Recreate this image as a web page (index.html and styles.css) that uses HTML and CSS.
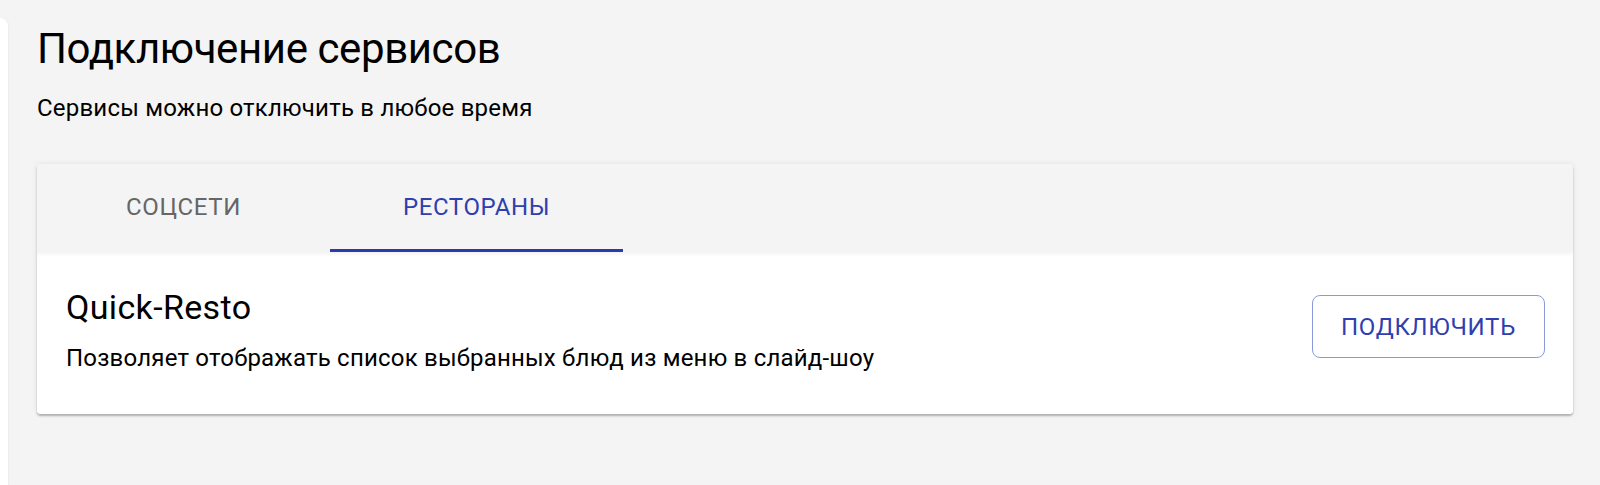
FILE: index.html
```html
<!DOCTYPE html>
<html lang="ru">
<head>
<meta charset="utf-8">
<link rel="stylesheet" href="styles.css">
</head>
<body>
<div class="layout">
  <aside class="side"></aside>
  <main class="content">
    <h1 class="title">Подключение сервисов</h1>
    <p class="subtitle">Сервисы можно отключить в любое время</p>
    <section class="panel">
      <nav class="tabs">
        <div class="tab">Соцсети</div>
        <div class="tab active">Рестораны</div>
      </nav>
      <div class="card">
        <div class="card-text">
          <div class="card-title">Quick-Resto</div>
          <div class="card-desc">Позволяет отображать список выбранных блюд из меню в слайд-шоу</div>
        </div>
        <button class="btn">Подключить</button>
      </div>
    </section>
  </main>
</div>
</body>
</html>
```
FILE: styles.css
```css
html, body {
  margin: 0;
  padding: 0;
  background: #f4f4f4;
  font-family: Roboto, "Liberation Sans", sans-serif;
  color: #000;
}
.layout {
  display: flex;
  height: 485px;
  overflow: hidden;
}
.side {
  width: 8px;
  margin-top: 18px;
  background: #fff;
  border-top-right-radius: 8px;
  box-shadow: 1px 0 2px rgba(0,0,0,0.04);
  flex: none;
}
.content {
  flex: 1;
  padding: 0 27px 0 29px;
}
.title {
  margin: 25px 0 0;
  font-size: 42px;
  font-weight: 400;
  line-height: 48px;
  letter-spacing: -0.4px;
}
.subtitle {
  margin: 21px 0 0;
  font-size: 24px;
  line-height: 28px;
  letter-spacing: 0.2px;
}
.panel {
  margin-top: 42px;
  border-radius: 4px;
  box-shadow: 0 2px 2px rgba(0,0,0,0.25), 0 0 6px rgba(0,0,0,0.08);
  overflow: hidden;
}
.tabs {
  display: flex;
  height: 88px;
  background: #f4f4f4;
  box-shadow: 0 2px 4px rgba(0,0,0,0.06);
  position: relative;
}
.tab {
  width: 293px;
  display: flex;
  align-items: center;
  justify-content: center;
  font-size: 24px;
  text-transform: uppercase;
  color: #666;
  letter-spacing: 0.6px;
  border-bottom: 3px solid transparent;
  box-sizing: border-box;
}
.tab.active {
  color: #2f3fae;
  border-bottom-color: #2a3cad;
}
.card {
  background: #fff;
  display: flex;
  align-items: flex-start;
  justify-content: space-between;
  padding: 36px 28px 42px 29px;
}
.card-title {
  font-size: 34px;
  line-height: 38px;
  letter-spacing: 0.35px;
}
.card-desc {
  margin-top: 18px;
  font-size: 24px;
  line-height: 28px;
  letter-spacing: 0.2px;
}
.btn {
  background: #fff;
  border: 1px solid #8d98d8;
  border-radius: 8px;
  width: 233px;
  height: 63px;
  font-family: inherit;
  font-size: 24px;
  text-transform: uppercase;
  color: #2f3fae;
  letter-spacing: 0.7px;
  margin-top: 7px;
  padding: 0;
}
```
